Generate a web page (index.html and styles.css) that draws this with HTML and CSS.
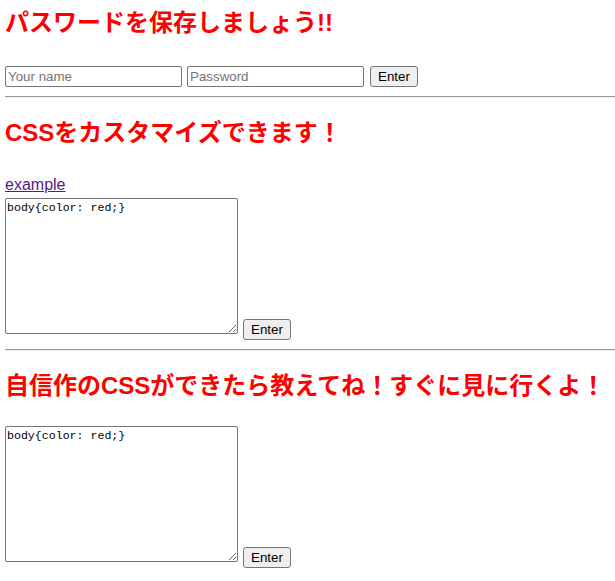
FILE: index.html
```html
<!DOCTYPE html>
<html lang="ja">
<head>
<meta charset="utf-8">
<title>CSS</title>
<link rel="stylesheet" href="styles.css">
</head>
<body>
<section class="block first">
  <h2 class="title">パスワードを保存しましょう!!</h2>
  <form class="login-row">
    <input class="field" type="text" placeholder="Your name">
    <input class="field" type="password" placeholder="Password">
    <button class="btn" type="button">Enter</button>
  </form>
</section>
<hr class="rule">
<section class="block">
  <h2 class="title">CSSをカスタマイズできます！</h2>
  <a class="link" href="#">example</a>
  <div class="editor-row">
    <textarea class="code">body{color: red;}</textarea>
    <button class="btn" type="button">Enter</button>
  </div>
</section>
<hr class="rule">
<section class="block">
  <h2 class="title">自信作のCSSができたら教えてね！すぐに見に行くよ！</h2>
  <div class="editor-row gap-top">
    <textarea class="code">body{color: red;}</textarea>
    <button class="btn" type="button">Enter</button>
  </div>
</section>
</body>
</html>
```
FILE: styles.css
```css
html, body {
  margin: 0;
  padding: 0;
  background: #fff;
}
body {
  padding-left: 5px;
  font-family: "Liberation Sans", "Noto Sans CJK JP", sans-serif;
  font-size: 16px;
  color: #000;
}
.block {
  display: flex;
  flex-direction: column;
  align-items: flex-start;
}
.title {
  margin: 21px 0 0 0;
  color: #ff0000;
  font-size: 24px;
  line-height: 28px;
  font-weight: bold;
  font-family: "Liberation Sans", "Noto Sans CJK JP", sans-serif;
}
.first .title {
  margin-top: 9px;
}
.login-row {
  display: flex;
  gap: 5px;
  margin: 29px 0 0 0;
  align-items: center;
}
.field {
  box-sizing: border-box;
  width: 177px;
  height: 21px;
  margin: 0;
  padding: 1px 2px;
  border: 1px solid #767676;
  border-radius: 2px;
  font-family: "Liberation Sans", sans-serif;
  font-size: 13.33px;
  color: #000;
}
.field::placeholder {
  color: #757575;
}
.login-row .btn {
  margin-left: 1px;
}
.btn {
  box-sizing: border-box;
  height: 21px;
  margin: 0;
  padding: 1px 7px;
  border: 1px solid #767676;
  border-radius: 3px;
  background: #efefef;
  font-family: "Liberation Sans", sans-serif;
  font-size: 13.33px;
  color: #000;
}
.rule {
  margin: 9px 0 0 0;
  border: 0;
  border-top: 1px solid #9a9a9a;
  border-bottom: 1px solid #eeeeee;
  height: 0;
}
.link {
  margin-top: 29px;
  color: #551a8b;
  font-size: 16px;
  line-height: 18px;
  text-decoration: underline;
}
.editor-row {
  display: flex;
  align-items: flex-end;
  gap: 5px;
  margin-top: 4px;
  padding-bottom: 6px;
}
.gap-top {
  margin-top: 26px;
}
.code {
  box-sizing: border-box;
  width: 233px;
  height: 136px;
  margin: 0;
  padding: 2px 1px;
  border: 1px solid #767676;
  border-radius: 2px;
  font-family: "Liberation Mono", "DejaVu Sans Mono", monospace;
  font-size: 11.6px;
  line-height: 14px;
  color: #000;
  resize: both;
}
.editor-row .btn {
  margin-bottom: -6px;
}
```
